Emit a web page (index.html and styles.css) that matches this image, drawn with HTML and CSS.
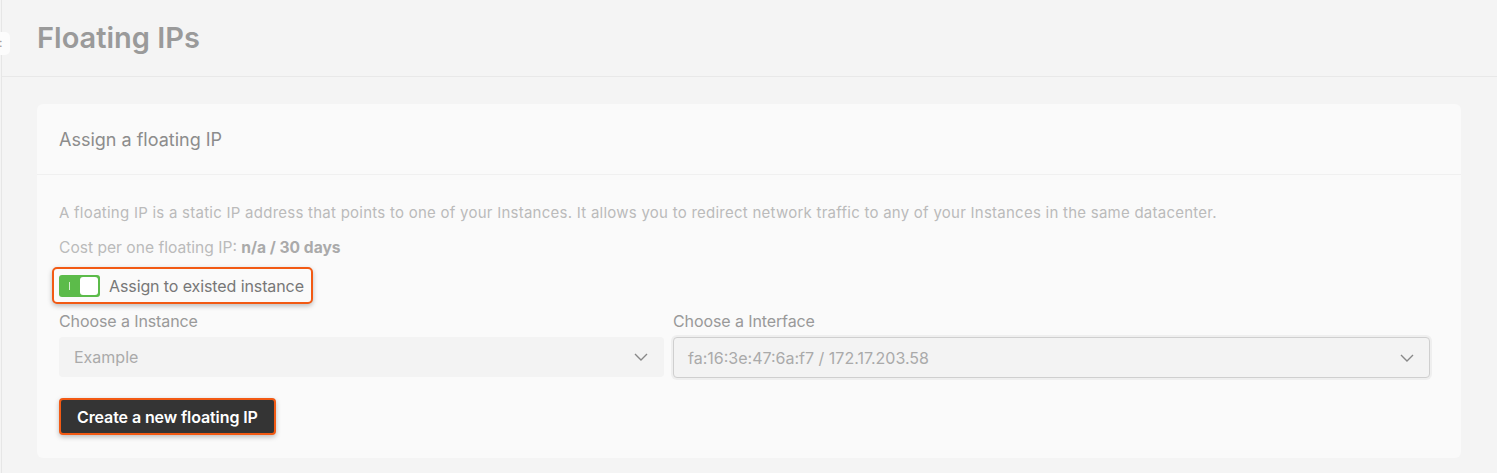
FILE: index.html
```html
<!DOCTYPE html>
<html lang="en">
	<head>
		<meta charset="UTF-8" />
		<meta name="viewport" content="width=device-width, initial-scale=1.0" />
		<title>Floating IPs</title>
		<link rel="stylesheet" href="styles.css">
	</head>
	<body>
		<div class="sidebar-edge">
			<div class="sidebar-tab">:</div>
		</div>

		<div class="page">
			<div class="page-header">
				<h1>Floating IPs</h1>
			</div>

			<div class="content">
				<div class="card">
					<div class="card-header">Assign a floating IP</div>
					<div class="card-body">
						<p class="desc">A floating IP is a static IP address that points to one of your Instances. It allows you to redirect network traffic to any of your Instances in the same datacenter.</p>
						<p class="cost">Cost per one floating IP: <b>n/a / 30 days</b></p>

						<div class="toggle-row highlight">
							<span class="toggle"><span class="toggle-mark"></span><span class="toggle-knob"></span></span>
							<span class="toggle-label">Assign to existed instance</span>
						</div>

						<div class="fields">
							<div class="field">
								<label>Choose a Instance</label>
								<div class="select select-plain">
									<span>Example</span>
									<svg class="chevron" width="14" height="8" viewBox="0 0 14 8"><path d="M1 1l6 6 6-6" fill="none" stroke="#888" stroke-width="1.4" /></svg>
								</div>
							</div>
							<div class="field field-wide">
								<label>Choose a Interface</label>
								<div class="select select-bordered">
									<span>fa:16:3e:47:6a:f7 / 172.17.203.58</span>
									<svg class="chevron" width="14" height="8" viewBox="0 0 14 8"><path d="M1 1l6 6 6-6" fill="none" stroke="#888" stroke-width="1.4" /></svg>
								</div>
							</div>
						</div>

						<button class="btn-create highlight">Create a new floating IP</button>
					</div>
				</div>
			</div>
		</div>
	</body>
</html>
```

FILE: styles.css
```css
body {
	margin: 0;
	font-family: Inter, 'Noto Sans', sans-serif;
	background-color: #f4f4f4;
	color: #888;
	height: 473px;
	overflow: hidden;
	display: flex;
}
.sidebar-edge {
	width: 1px;
	background-color: #e6e6e6;
	position: relative;
	flex-shrink: 0;
	margin-left: 1px;
}
.sidebar-tab {
	position: absolute;
	top: 32px;
	left: -2px;
	width: 11px;
	height: 23px;
	background-color: #fcfcfc;
	border-radius: 0 5px 5px 0;
	color: #999;
	font-size: 12px;
	line-height: 22px;
}
.page {
	flex: 1;
}
.page-header {
	height: 76px;
	border-bottom: 1px solid #e8e8e8;
	padding-left: 35px;
	display: flex;
	align-items: center;
}
h1 {
	margin: 0;
	margin-top: -1px;
	font-size: 29px;
	font-weight: 600;
	color: #9a9a9a;
}
.content {
	padding: 27px 36px 0 35px;
}
.card {
	background-color: #fafafa;
	border-radius: 6px;
	height: 354px;
}
.card-header {
	height: 70px;
	border-bottom: 1px solid #f0f0f0;
	padding-left: 22px;
	display: flex;
	align-items: center;
	font-size: 18px;
	color: #8c8c8c;
}
.card-body {
	padding: 28px 22px 0 22px;
}
.desc {
	margin: 0;
	font-size: 15px;
	letter-spacing: 0.25px;
	color: #bbb;
	line-height: 20px;
}
.cost {
	margin: 15px 0 0 0;
	font-size: 15.6px;
	color: #bbb;
	line-height: 20px;
}
.cost b {
	color: #aaa;
	font-weight: 700;
}
.highlight {
	border: 2px solid #f25a14;
	box-shadow: 0 2px 5px rgba(0, 0, 0, 0.25);
}
.toggle-row {
	margin: 9px 0 0 -7px;
	display: inline-flex;
	align-items: center;
	gap: 9px;
	box-sizing: border-box;
	height: 37px;
	padding: 0 7px 0 5px;
	border-radius: 5px;
	background-color: #fafafa;
}
.toggle {
	width: 41px;
	height: 22px;
	border-radius: 3px;
	background-color: #5cbb4a;
	position: relative;
	display: inline-block;
}
.toggle-mark {
	position: absolute;
	left: 10px;
	top: 7px;
	width: 1px;
	height: 8px;
	background-color: #d8f0d2;
}
.toggle-knob {
	position: absolute;
	right: 2px;
	top: 2px;
	width: 18px;
	height: 18px;
	border-radius: 3px;
	background-color: #fff;
}
.toggle-label {
	font-size: 16px;
	letter-spacing: -0.1px;
	color: #777;
}
.fields {
	display: flex;
	gap: 9px;
	margin-top: 7px;
	width: 1371px;
}
.field {
	display: flex;
	flex-direction: column;
	width: 605px;
}
.field-wide {
	width: 757px;
}
label {
	font-size: 16px;
	letter-spacing: -0.1px;
	color: #999;
	line-height: 20px;
	margin-bottom: 6px;
}
.select {
	height: 40px;
	box-sizing: border-box;
	display: flex;
	align-items: center;
	justify-content: space-between;
	padding: 0 16px 0 15px;
	font-size: 16px;
	color: #aaa;
	border-radius: 4px;
}
.select-plain {
	background-color: #f3f3f3;
}
.select-bordered {
	background-color: #f3f3f3;
	border: 1px solid #cfcfcf;
	box-shadow: 0 0 0 2px #efefef;
	height: 41px;
	padding: 0 15px 0 14px;
}
.btn-create {
	margin-top: 20px;
	height: 37px;
	padding: 0 16px;
	background-color: #343434;
	color: #fff;
	border-radius: 4px;
	font-family: Inter, 'Noto Sans', sans-serif;
	font-size: 16px;
	letter-spacing: -0.1px;
	font-weight: 600;
	cursor: pointer;
}
```
